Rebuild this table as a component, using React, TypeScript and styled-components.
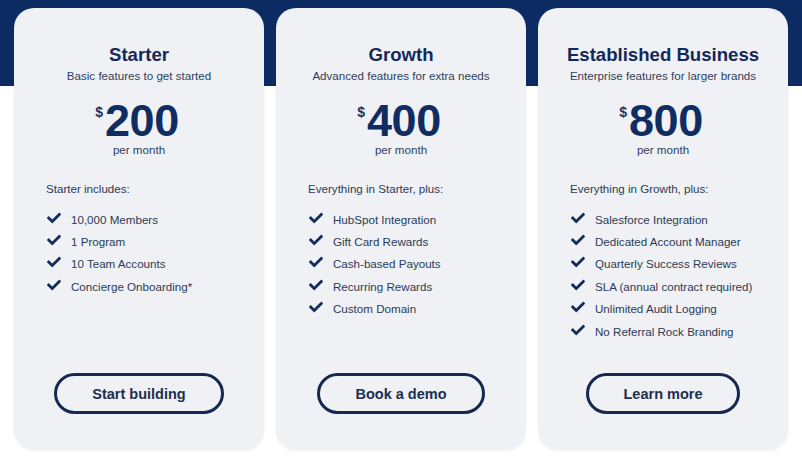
import styled, { createGlobalStyle } from "styled-components";
import { FaCheck } from "react-icons/fa";

const GlobalStyle = createGlobalStyle`
  body {
    margin: 0;
    font-family: "Liberation Sans", Arial, sans-serif;
    background: #ffffff;
  }
`;

const Page = styled.div`
  width: 802px;
  height: 469px;
  background: linear-gradient(to bottom, #0d2b63 0px, #0d2b63 86px, #ffffff 86px);
  display: flex;
  gap: 12px;
  padding: 8px 13px 0 14px;
  box-sizing: border-box;
`;

const Card = styled.div`
  width: 250px;
  height: 442px;
  background: #eff1f4;
  border-radius: 20px;
  box-sizing: border-box;
  padding: 36px 20px 36px 32px;
  display: flex;
  flex-direction: column;
  box-shadow: 0 1px 3px rgba(15, 30, 60, 0.06);
`;

const Head = styled.div`
  margin-left: -12px;
  display: flex;
  flex-direction: column;
  align-items: center;
`;

const Title = styled.h2`
  margin: 0;
  font-size: 18.6px;
  line-height: 22px;
  font-weight: 700;
  color: #13295a;
  white-space: nowrap;
`;

const Subtitle = styled.p`
  margin: 2px 0 0;
  font-size: 11.6px;
  line-height: 16px;
  color: #2f3e5c;
  white-space: nowrap;
`;

const PriceRow = styled.div`
  margin-top: 15px;
  display: flex;
  align-items: flex-start;
  color: #0f2c63;
  font-weight: 700;
`;

const Dollar = styled.span`
  font-size: 14px;
  line-height: 14px;
  margin: 6px 2px 0 -4px;
  color: #1a3366;
`;

const Amount = styled.span`
  font-size: 45px;
  line-height: 44px;
  letter-spacing: -0.5px;
`;

const Period = styled.p`
  margin: 0;
  font-size: 11.6px;
  line-height: 14px;
  color: #2f3e5c;
`;

const Includes = styled.p`
  margin: 25px 0 12px;
  font-size: 11.6px;
  line-height: 14px;
  color: #2c3a57;
`;

const List = styled.ul`
  list-style: none;
  margin: 0;
  padding: 0;
`;

const Item = styled.li`
  display: flex;
  align-items: center;
  gap: 9px;
  height: 22.4px;
  font-size: 11.6px;
  color: #2c3a57;
  white-space: nowrap;

  svg {
    width: 16px;
    height: 14px;
    color: #142c5c;
    flex: none;
    margin-top: -3px;
  }
`;

const Button = styled.button`
  margin: auto 0 0 -12px;
  align-self: center;
  height: 41px;
  padding: 0 35px;
  border: 3px solid #14294f;
  border-radius: 22px;
  background: transparent;
  font-family: inherit;
  font-size: 14.5px;
  font-weight: 700;
  color: #1e2e4f;
  cursor: pointer;
  white-space: nowrap;
`;

type Plan = {
  name: string;
  blurb: string;
  price: string;
  label: string;
  features: string[];
  cta: string;
};

const plans: Plan[] = [
  {
    name: "Starter",
    blurb: "Basic features to get started",
    price: "200",
    label: "Starter includes:",
    features: ["10,000 Members", "1 Program", "10 Team Accounts", "Concierge Onboarding*"],
    cta: "Start building",
  },
  {
    name: "Growth",
    blurb: "Advanced features for extra needs",
    price: "400",
    label: "Everything in Starter, plus:",
    features: [
      "HubSpot Integration",
      "Gift Card Rewards",
      "Cash-based Payouts",
      "Recurring Rewards",
      "Custom Domain",
    ],
    cta: "Book a demo",
  },
  {
    name: "Established Business",
    blurb: "Enterprise features for larger brands",
    price: "800",
    label: "Everything in Growth, plus:",
    features: [
      "Salesforce Integration",
      "Dedicated Account Manager",
      "Quarterly Success Reviews",
      "SLA (annual contract required)",
      "Unlimited Audit Logging",
      "No Referral Rock Branding",
    ],
    cta: "Learn more",
  },
];

export default function App() {
  return (
    <>
      <GlobalStyle />
      <Page>
        {plans.map((plan) => (
          <Card key={plan.name}>
            <Head>
              <Title>{plan.name}</Title>
              <Subtitle>{plan.blurb}</Subtitle>
              <PriceRow>
                <Dollar>$</Dollar>
                <Amount>{plan.price}</Amount>
              </PriceRow>
              <Period>per month</Period>
            </Head>
            <Includes>{plan.label}</Includes>
            <List>
              {plan.features.map((f) => (
                <Item key={f}>
                  <FaCheck />
                  {f}
                </Item>
              ))}
            </List>
            <Button>{plan.cta}</Button>
          </Card>
        ))}
      </Page>
    </>
  );
}
